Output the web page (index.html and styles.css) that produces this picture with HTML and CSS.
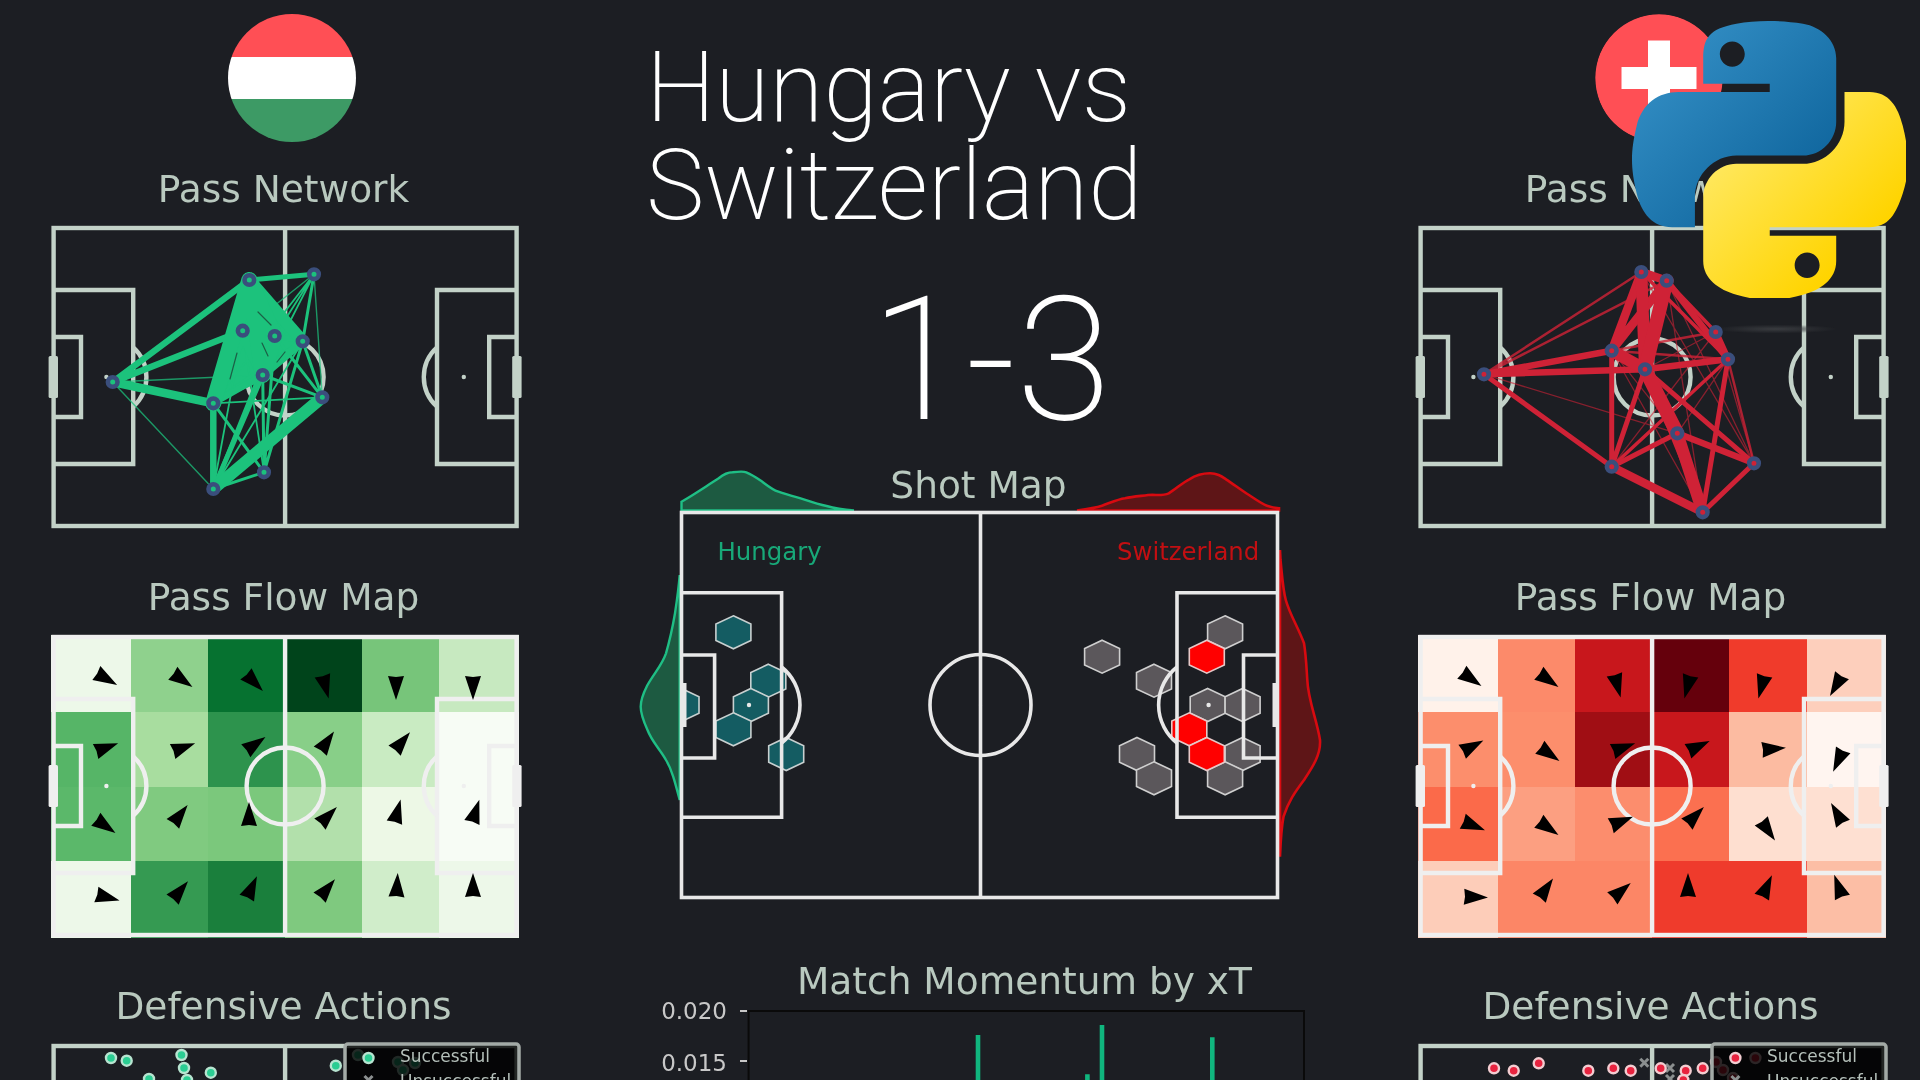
FILE: index.html
```html
<!DOCTYPE html>
<html lang="en">
<head>
  <meta charset="UTF-8" />
  <meta name="viewport" content="width=device-width, initial-scale=1.0"/>
  <title>Hungary vs Switzerland</title>
  <link rel="stylesheet" href="styles.css">
</head>
<body>
  <!-- shared shapes for all the charts -->
  <svg class="defs" aria-hidden="true">
    <defs>
      <g id="pitch" class="pitch">
        <rect x="0" y="0" width="463" height="298"/>
        <path d="M231.5 0V298M0 62H79.6V236H0M0 109H27.4V189H0M463 62H383.4V236H463M463 109H435.6V189H463"/>
        <circle cx="231.5" cy="149" r="38.5"/>
        <path d="M79.6 119.3A40 40 0 0 1 79.6 178.7M383.4 119.3A40 40 0 0 0 383.4 178.7"/>
        <circle class="spot" cx="52.8" cy="149" r="2.2"/>
        <circle class="spot" cx="410.2" cy="149" r="2.2"/>
      </g>
      <g id="goals" class="spot">
        <rect x="-5" y="128" width="9.4" height="42" rx="1.5"/>
        <rect x="458.6" y="128" width="9.4" height="42" rx="1.5"/>
      </g>
      <path id="arrow" d="M0 -14L8 10L0 9L-8 10Z"/>
      <polygon id="hex" points="0,-16.5 17.5,-8.2 17.5,8.2 0,16.5 -17.5,8.2 -17.5,-8.2"/>
      <path id="cross" d="M-4 -4L4 4M-4 4L4 -4"/>
      <linearGradient id="pyBlue" x1="0" y1="0" x2="1" y2="1">
        <stop offset="0" stop-color="#3a96cc"/>
        <stop offset="1" stop-color="#075c94"/>
      </linearGradient>
      <linearGradient id="pyYellow" x1="0.1" y1="0.1" x2="0.75" y2="0.75">
        <stop offset="0" stop-color="#ffeb6e"/>
        <stop offset="1" stop-color="#ffd400"/>
      </linearGradient>
      <radialGradient id="logoShadow">
        <stop offset="0" stop-color="#3a3c40"/>
        <stop offset="1" stop-color="#3a3c40" stop-opacity="0"/>
      </radialGradient>
    </defs>
  </svg>

  <div class="page">

    <!-- Hungary column -->
    <section class="team">
      <div class="flag flag-hu"></div>
      <h2 class="first">Pass Network</h2>
      <svg class="chart lines-soft net-green" width="468" height="303" viewBox="51 226 468 303">
        <use href="#pitch" transform="translate(53.6 228)"/>
        <use href="#goals" transform="translate(53.6 228)"/>
        <g class="edges">
          <polygon class="mass" points="249,282 300,338 264,380 216,402 236,332"/>
          <path stroke-width="1.4" opacity="0.75" d="M112.7 382L213.3 489M314 274.3L322.3 397.3M112.7 382L262.7 375M314 274.3L242.7 330.7"/>
          <path stroke-width="1.8" d="M314 274.3L274.7 336M314 274.3L262.7 375M314 274.3L213.3 403.3M322.3 397.3L213.3 403.3M264 472.3L242.7 330.7M213.3 489L242.7 330.7M213.3 489L302.7 341.3"/>
          <path stroke-width="3" d="M213.3 403.3L264 472.3M213.3 489L262.7 375M213.3 489L274.7 336M322.3 397.3L262.7 375M322.3 397.3L274.7 336M264 472.3L274.7 336M264 472.3L302.7 341.3M264 472.3L262.7 375M213.3 489L264 472.3M322.3 397.3L302.7 341.3M314 274.3L302.7 341.3"/>
          <path stroke-width="5" d="M249.3 280L314 274.3M302.7 341.3L213.3 403.3M274.7 336L302.7 341.3M213.3 489L262.7 375"/>
          <path stroke-width="6.5" d="M112.7 382L249.3 280M112.7 382L242.7 330.7M213.3 403.3L213.3 489M262.7 375L213.3 403.3"/>
          <path stroke-width="8.5" d="M112.7 382L213.3 403.3M302.7 341.3L262.7 375M242.7 330.7L274.7 336"/>
          <path stroke-width="12" d="M249.3 280L242.7 330.7M249.3 280L302.7 341.3M242.7 330.7L213.3 403.3M242.7 330.7L262.7 375M322.3 397.3L213.3 489"/>
          <path stroke-width="16" d="M249.3 280L213.3 403.3M249.3 280L274.7 336M249.3 280L262.7 375M274.7 336L262.7 375"/>
          <path class="slit" d="M258 312L271 325M237 353L230 379M262 343L268 356M285 352L277 362"/>
        </g>
        <g class="nodes">
          <circle cx="112.7" cy="382" r="4.8"/><circle cx="249.3" cy="280" r="4.8"/><circle cx="314" cy="274.3" r="4.8"/>
          <circle cx="242.7" cy="330.7" r="4.8"/><circle cx="274.7" cy="336" r="4.8"/><circle cx="302.7" cy="341.3" r="4.8"/>
          <circle cx="262.7" cy="375" r="4.8"/><circle cx="213.3" cy="403.3" r="4.8"/><circle cx="322.3" cy="397.3" r="4.8"/>
          <circle cx="264" cy="472.3" r="4.8"/><circle cx="213.3" cy="489" r="4.8"/>
        </g>
      </svg>

      <h2>Pass Flow Map</h2>
      <svg class="chart lines-white" width="468" height="303" viewBox="51 635 468 303">
        <g shape-rendering="crispEdges">
          <rect x="51.3" y="635" width="79.7" height="77" fill="#edf8e9"/><rect x="131" y="635" width="77" height="77" fill="#8fd18d"/><rect x="208" y="635" width="77" height="77" fill="#067230"/><rect x="285" y="635" width="77.4" height="77" fill="#00441b"/><rect x="362.4" y="635" width="76.6" height="77" fill="#77c57a"/><rect x="439" y="635" width="80" height="77" fill="#c7e9c0"/>
          <rect x="51.3" y="712" width="79.7" height="74.7" fill="#56b567"/><rect x="131" y="712" width="77" height="74.7" fill="#a8dd9f"/><rect x="208" y="712" width="77" height="74.7" fill="#2d934d"/><rect x="285" y="712" width="77.4" height="74.7" fill="#88cf88"/><rect x="362.4" y="712" width="76.6" height="74.7" fill="#c9ebc2"/><rect x="439" y="712" width="80" height="74.7" fill="#f7fcf5"/>
          <rect x="51.3" y="786.7" width="79.7" height="74.3" fill="#5bb86a"/><rect x="131" y="786.7" width="77" height="74.3" fill="#80ca80"/><rect x="208" y="786.7" width="77" height="74.3" fill="#7bc87c"/><rect x="285" y="786.7" width="77.4" height="74.3" fill="#b2e0ab"/><rect x="362.4" y="786.7" width="76.6" height="74.3" fill="#edf8e6"/><rect x="439" y="786.7" width="80" height="74.3" fill="#f7fcf5"/>
          <rect x="51.3" y="861" width="79.7" height="77" fill="#edf8e9"/><rect x="131" y="861" width="77" height="77" fill="#359a52"/><rect x="208" y="861" width="77" height="77" fill="#1a7f3c"/><rect x="285" y="861" width="77.4" height="77" fill="#7fc97f"/><rect x="362.4" y="861" width="76.6" height="77" fill="#d0edca"/><rect x="439" y="861" width="80" height="77" fill="#edf8e9"/>
        </g>
        <use href="#pitch" transform="translate(53.6 637)"/>
        <use href="#goals" transform="translate(53.6 637)"/>
        <use href="#arrow" transform="translate(105 678) rotate(120)"/><use href="#arrow" transform="translate(181 679) rotate(125)"/><use href="#arrow" transform="translate(253 681) rotate(135)"/><use href="#arrow" transform="translate(325 685) rotate(165)"/><use href="#arrow" transform="translate(396 686) rotate(180)"/><use href="#arrow" transform="translate(473 686) rotate(180)"/>
        <use href="#arrow" transform="translate(105 748) rotate(70)"/><use href="#arrow" transform="translate(182 748) rotate(70)"/><use href="#arrow" transform="translate(254 745) rotate(55)"/><use href="#arrow" transform="translate(326 743) rotate(35)"/><use href="#arrow" transform="translate(401 743) rotate(40)"/>
        <use href="#arrow" transform="translate(104 825) rotate(125)"/><use href="#arrow" transform="translate(179 816) rotate(38)"/><use href="#arrow" transform="translate(249 816) rotate(0)"/><use href="#arrow" transform="translate(327 817) rotate(45)"/><use href="#arrow" transform="translate(397 813) rotate(15)"/><use href="#arrow" transform="translate(475 813) rotate(18)"/>
        <use href="#arrow" transform="translate(106 897) rotate(105)"/><use href="#arrow" transform="translate(179 892) rotate(40)"/><use href="#arrow" transform="translate(251 889) rotate(25)"/><use href="#arrow" transform="translate(326 890) rotate(40)"/><use href="#arrow" transform="translate(397 887) rotate(3)"/><use href="#arrow" transform="translate(473 887) rotate(0)"/>
      </svg>

      <h2>Defensive Actions</h2>
      <svg class="chart lines-soft" width="468" height="303" viewBox="51 1044 468 303">
        <use href="#pitch" transform="translate(53.6 1046)"/>
        <g class="dots-green">
          <circle cx="111" cy="1058" r="5"/><circle cx="126.7" cy="1060.7" r="5"/><circle cx="181.5" cy="1055" r="5"/><circle cx="184" cy="1068" r="5"/><circle cx="210.8" cy="1072.7" r="5"/><circle cx="149" cy="1079" r="5"/><circle cx="187" cy="1080" r="5"/><circle cx="335.8" cy="1065.7" r="5"/>
          <circle cx="358" cy="1055" r="5"/><circle cx="398" cy="1062" r="5"/><circle cx="415" cy="1063" r="5"/><circle cx="403" cy="1070" r="5"/>
        </g>
        <rect class="legend-box" x="345" y="1044" width="174" height="60" rx="3"/>
        <circle class="legend-dot-green" cx="368.5" cy="1058" r="5"/>
        <use class="legend-x" href="#cross" transform="translate(368.5 1080)"/>
        <text class="legend-text" x="400" y="1062">Successful</text>
        <text class="legend-text" x="400" y="1087">Unsuccessful</text>
      </svg>
    </section>

    <!-- match column -->
    <section class="match">
      <h1>Hungary vs<br>Switzerland</h1>
      <div class="score">1-3</div>
      <h2 class="shot-title">Shot Map</h2>
      <svg class="chart shot" width="700" height="395" viewBox="630 510 700 395">
        <path class="kde-green" d="M681.5 510.5V501.7C690 497 705 487 718.7 478.3C724 474 728 472.3 732.5 472.3C739 471.5 743 471 746.3 472.3C753 475 757 478 762.3 481.7C768 486 772 489.5 778.4 491.7C788 495 796 497 803.7 499.3C812 502 820 504.5 826.6 506C833 508 838 509.5 854 510.5Z"/>
        <path class="kde-red" d="M1077 510.5C1088 509 1095 508 1102 505.7C1110 503 1117 499.5 1125 498.3C1133 496.5 1141 496 1148 495C1157 494.5 1163 496 1168.7 493.3C1176 489 1182 483 1189.3 479.3C1196 475 1203 473.3 1210 473.3C1217 473.3 1221 476 1226 479.3C1234 484.5 1241 490 1249 495C1255 499 1262 504 1267 505.7C1272 507.5 1276 508 1279 508.3V510.5Z"/>
        <path class="kde-green" d="M679.7 800C675 782 672 770 666 760C660 749 652 742 647.5 730C643 720 640.7 713 640.7 706.7C640.7 698 644 692 647.5 685C655 672 662 665 666 653.3C669 643 673 625 675 613.3C677 600 678.5 590 679.7 575Z"/>
        <path class="kde-red" d="M1280 550L1280.5 560C1282 575 1283 590 1285.8 600C1290 615 1298 627 1304 643.3C1306 655 1306.5 668 1307.3 680C1308 700 1317 720 1320 740C1321 755 1312 768 1304 780C1295 792 1288 802 1283.5 816.7C1281 830 1280.5 845 1280 856.7Z"/>
        <g class="hex-teal">
          <use href="#hex" x="733.4" y="632.3"/><use href="#hex" x="768.3" y="680.7"/><use href="#hex" x="750.9" y="705"/><use href="#hex" x="733.4" y="729.3"/><use href="#hex" x="786.2" y="754"/>
          <polygon points="681.5,688.5 699,696.8 699,713.2 681.5,721.5"/>
        </g>
        <g class="hex-grey">
          <use href="#hex" x="1225.1" y="632.3"/><use href="#hex" x="1102.1" y="656.7"/><use href="#hex" x="1154" y="680.7"/><use href="#hex" x="1207.7" y="705"/><use href="#hex" x="1242.6" y="705"/><use href="#hex" x="1137" y="754"/><use href="#hex" x="1242.6" y="754"/><use href="#hex" x="1154" y="778.3"/><use href="#hex" x="1225.1" y="778.3"/>
        </g>
        <g class="hex-red">
          <use href="#hex" x="1206.8" y="656.7"/><use href="#hex" x="1189.3" y="729.3"/><use href="#hex" x="1206.8" y="754"/>
        </g>
        <g class="pitch">
          <rect x="681.5" y="512.5" width="596" height="385"/>
          <path d="M980.5 512.5V897.5M681.5 592.7H781.6V817.3H681.5M681.5 655H714.6V758H681.5M1277.5 592.7H1177V817.3H1277.5M1277.5 655H1243.5V758H1277.5"/>
          <circle cx="980.5" cy="705" r="50.5"/>
          <path d="M781.6 667A48.5 48.5 0 0 1 781.6 743M1177 667A48.5 48.5 0 0 0 1177 743"/>
          <circle class="spot" cx="749" cy="705" r="2.2"/>
          <circle class="spot" cx="1208.6" cy="705" r="2.2"/>
          <circle class="spot" cx="980.5" cy="705" r="1.6"/>
        </g>
        <rect class="shot-goal" x="681.5" y="683" width="5" height="44"/>
        <rect class="shot-goal" x="1272.5" y="683" width="5" height="44"/>
        <text class="shot-label shot-label-home" x="717.5" y="560">Hungary</text>
        <text class="shot-label shot-label-away" x="1117" y="560">Switzerland</text>
      </svg>
      <h2 class="momentum-title">Match Momentum by xT</h2>
      <svg class="chart momentum" width="680" height="76" viewBox="640 1004 680 76">
        <rect class="axis-box" x="748.6" y="1011" width="555.4" height="120"/>
        <path class="tick" d="M740 1011H747M740 1061H747"/>
        <text class="tick-label" x="727" y="1019">0.020</text>
        <text class="tick-label" x="727" y="1071">0.015</text>
        <path class="bars" d="M978 1035V1080M1087.4 1074.3V1080M1102 1025V1080M1212.3 1037.3V1080"/>
      </svg>
    </section>

    <!-- Switzerland column -->
    <section class="team">
      <svg class="flag" width="128" height="128" viewBox="0 0 128 128">
        <circle cx="64" cy="64" r="63.7" fill="#ff4f55"/>
        <path d="M53 26.5H75V53H101.5V75H75V101.5H53V75H26.5V53H53Z" fill="#fff"/>
      </svg>
      <h2 class="first">Pass Network</h2>
      <svg class="chart lines-soft net-red" width="468" height="303" viewBox="1418 226 468 303">
        <use href="#pitch" transform="translate(1420.6 228)"/>
        <use href="#goals" transform="translate(1420.6 228)"/>
        <ellipse cx="1776" cy="329" rx="62" ry="4.5" fill="url(#logoShadow)"/>
        <g class="edges">
          <path stroke-width="1.3" opacity="0.6" d="M1484 374.3L1677.3 433.3M1611.7 350.7L1677.3 433.3M1666.7 280.7L1754 463.3M1715.7 332L1754 463.3M1611.7 466.7L1715.7 332M1666.7 280.7L1702.7 512.3M1645 369.3L1715.7 332M1611.7 350.7L1702.7 512.3M1641.3 272L1754 463.3M1677.3 433.3L1728 359.3"/>
          <path stroke-width="2.5" opacity="0.8" d="M1484 374.3L1641.3 272M1484 374.3L1666.7 280.7M1611.7 350.7L1715.7 332M1611.7 350.7L1728 359.3M1728 359.3L1754 463.3"/>
          <path stroke-width="3.5" d="M1728 359.3L1611.7 466.7M1645 369.3L1702.7 512.3M1641.3 272L1728 359.3M1666.7 280.7L1715.7 332"/>
          <path stroke-width="5" d="M1484 374.3L1611.7 466.7M1645 369.3L1754 463.3M1611.7 466.7L1677.3 433.3M1754 463.3L1702.7 512.3M1728 359.3L1702.7 512.3M1611.7 350.7L1611.7 466.7M1645 369.3L1611.7 466.7"/>
          <path stroke-width="6.5" d="M1484 374.3L1611.7 350.7M1484 374.3L1645 369.3M1645 369.3L1728 359.3M1677.3 433.3L1754 463.3M1715.7 332L1728 359.3M1666.7 280.7L1728 359.3"/>
          <path stroke-width="8.5" d="M1641.3 272L1666.7 280.7M1641.3 272L1611.7 350.7M1666.7 280.7L1611.7 350.7M1611.7 466.7L1702.7 512.3"/>
          <path stroke-width="12" d="M1641.3 272L1645 369.3M1677.3 433.3L1702.7 512.3M1611.7 350.7L1645 369.3"/>
          <path stroke-width="14" d="M1666.7 280.7L1645 369.3M1645 369.3L1677.3 433.3"/>
        </g>
        <g class="nodes">
          <circle cx="1484" cy="374.3" r="4.8"/><circle cx="1641.3" cy="272" r="4.8"/><circle cx="1666.7" cy="280.7" r="4.8"/>
          <circle cx="1715.7" cy="332" r="4.8"/><circle cx="1728" cy="359.3" r="4.8"/><circle cx="1611.7" cy="350.7" r="4.8"/>
          <circle cx="1645" cy="369.3" r="4.8"/><circle cx="1677.3" cy="433.3" r="4.8"/><circle cx="1754" cy="463.3" r="4.8"/>
          <circle cx="1611.7" cy="466.7" r="4.8"/><circle cx="1702.7" cy="512.3" r="4.8"/>
        </g>
      </svg>

      <h2>Pass Flow Map</h2>
      <svg class="chart lines-white" width="468" height="303" viewBox="1418 635 468 303">
        <g shape-rendering="crispEdges">
          <rect x="1418" y="635" width="79.8" height="77" fill="#fff2ea"/><rect x="1497.8" y="635" width="77.2" height="77" fill="#fc8a6a"/><rect x="1575" y="635" width="77" height="77" fill="#c8171c"/><rect x="1652" y="635" width="77.2" height="77" fill="#65000c"/><rect x="1729.2" y="635" width="77.5" height="77" fill="#f03b2b"/><rect x="1806.7" y="635" width="79.3" height="77" fill="#fdcfbc"/>
          <rect x="1418" y="712" width="79.8" height="74.7" fill="#fc8e6c"/><rect x="1497.8" y="712" width="77.2" height="74.7" fill="#fc8e6c"/><rect x="1575" y="712" width="77" height="74.7" fill="#a00e14"/><rect x="1652" y="712" width="77.2" height="74.7" fill="#c8171c"/><rect x="1729.2" y="712" width="77.5" height="74.7" fill="#fcbba1"/><rect x="1806.7" y="712" width="79.3" height="74.7" fill="#fff5f0"/>
          <rect x="1418" y="786.7" width="79.8" height="74.3" fill="#fb6a4a"/><rect x="1497.8" y="786.7" width="77.2" height="74.3" fill="#fc9f81"/><rect x="1575" y="786.7" width="77" height="74.3" fill="#fc8d6d"/><rect x="1652" y="786.7" width="77.2" height="74.3" fill="#fb7050"/><rect x="1729.2" y="786.7" width="77.5" height="74.3" fill="#fedfd0"/><rect x="1806.7" y="786.7" width="79.3" height="74.3" fill="#fee0d2"/>
          <rect x="1418" y="861" width="79.8" height="77" fill="#fdcdb9"/><rect x="1497.8" y="861" width="77.2" height="77" fill="#fc8666"/><rect x="1575" y="861" width="77" height="77" fill="#fc8666"/><rect x="1652" y="861" width="77.2" height="77" fill="#ef3b2c"/><rect x="1729.2" y="861" width="77.5" height="77" fill="#ef3b2c"/><rect x="1806.7" y="861" width="79.3" height="77" fill="#fcbea5"/>
        </g>
        <use href="#pitch" transform="translate(1420.6 637)"/>
        <use href="#goals" transform="translate(1420.6 637)"/>
        <use href="#arrow" transform="translate(1470 678) rotate(125)"/><use href="#arrow" transform="translate(1547 679) rotate(125)"/><use href="#arrow" transform="translate(1617 684) rotate(165)"/><use href="#arrow" transform="translate(1688 685) rotate(195)"/><use href="#arrow" transform="translate(1762 685) rotate(195)"/><use href="#arrow" transform="translate(1837 684) rotate(210)"/>
        <use href="#arrow" transform="translate(1471 747) rotate(62)"/><use href="#arrow" transform="translate(1548 753) rotate(125)"/><use href="#arrow" transform="translate(1622 748) rotate(70)"/><use href="#arrow" transform="translate(1697 747) rotate(65)"/><use href="#arrow" transform="translate(1772 749) rotate(85)"/><use href="#arrow" transform="translate(1839 759) rotate(205)"/>
        <use href="#arrow" transform="translate(1472 825) rotate(112)"/><use href="#arrow" transform="translate(1547 827) rotate(125)"/><use href="#arrow" transform="translate(1620 822) rotate(68)"/><use href="#arrow" transform="translate(1694 817) rotate(45)"/><use href="#arrow" transform="translate(1767 829) rotate(145)"/><use href="#arrow" transform="translate(1838 815) rotate(330)"/>
        <use href="#arrow" transform="translate(1474 897) rotate(92)"/><use href="#arrow" transform="translate(1545 890) rotate(35)"/><use href="#arrow" transform="translate(1620 892) rotate(50)"/><use href="#arrow" transform="translate(1688 887) rotate(0)"/><use href="#arrow" transform="translate(1766 888) rotate(25)"/><use href="#arrow" transform="translate(1839 888) rotate(340)"/>
      </svg>

      <h2>Defensive Actions</h2>
      <svg class="chart lines-soft" width="468" height="303" viewBox="1418 1044 468 303">
        <use href="#pitch" transform="translate(1420.6 1046)"/>
        <use class="def-x" href="#cross" transform="translate(1644.3 1062.7)"/>
        <use class="def-x" href="#cross" transform="translate(1670 1068)"/>
        <use class="def-x" href="#cross" transform="translate(1670 1079)"/>
        <g class="dots-red">
          <circle cx="1494" cy="1068.3" r="5"/><circle cx="1513.7" cy="1070.7" r="5"/><circle cx="1538.7" cy="1063.3" r="5"/><circle cx="1588.3" cy="1070.7" r="5"/><circle cx="1613.3" cy="1068.3" r="5"/><circle cx="1630.7" cy="1070.7" r="5"/><circle cx="1660.7" cy="1068.3" r="5"/><circle cx="1685.7" cy="1070.7" r="5"/><circle cx="1702.7" cy="1068.3" r="5"/><circle cx="1683.3" cy="1080" r="5"/>
          <circle cx="1755.4" cy="1058" r="5"/><circle cx="1716" cy="1062" r="5"/><circle cx="1723" cy="1070" r="5"/><circle cx="1733" cy="1078" r="5"/>
        </g>
        <rect class="legend-box" x="1712" y="1044" width="174" height="60" rx="3"/>
        <circle class="legend-dot-red" cx="1735.4" cy="1058" r="5"/>
        <use class="legend-x" href="#cross" transform="translate(1735.4 1080)"/>
        <text class="legend-text" x="1767" y="1062">Successful</text>
        <text class="legend-text" x="1767" y="1087">Unsuccessful</text>
      </svg>
    </section>
  </div>

  <!-- python logo sits over the Switzerland column -->
  <svg class="python-logo" viewBox="0 0 110.42 110.84" aria-hidden="true">
    <path fill="url(#pyBlue)" fill-rule="evenodd" d="M54.919 0C50.335 .022 45.958 .413 42.106 1.095C30.760 3.099 28.700 7.295 28.700 15.032V25.251H55.513V28.657H28.700H18.638C10.845 28.657 4.022 33.341 1.888 42.251C-.574 52.464 -.683 58.837 1.888 69.501C3.794 77.439 8.345 83.095 16.138 83.095H25.356V70.845C25.356 61.995 33.013 54.189 42.106 54.189H68.887C76.342 54.189 82.293 48.051 82.293 40.564V15.032C82.293 7.766 76.163 2.308 68.887 1.095C64.282 .328 59.502 -.020 54.919 0ZM40.419 8.220C43.188 8.220 45.450 10.518 45.450 13.345C45.450 16.161 43.188 18.439 40.419 18.439C37.639 18.439 35.388 16.161 35.388 13.345C35.388 10.518 37.639 8.220 40.419 8.220Z"/>
    <path fill="url(#pyYellow)" fill-rule="evenodd" d="M85.638 28.657V40.563C85.638 49.794 77.812 57.563 68.888 57.563H42.106C34.770 57.563 28.700 63.842 28.700 71.188V96.719C28.700 103.985 35.018 108.259 42.106 110.344C50.593 112.840 58.732 113.291 68.887 110.344C75.637 108.390 82.293 104.457 82.293 96.719V86.501H55.512V83.095H82.293H95.699C103.492 83.095 106.396 77.674 109.106 69.501C111.905 61.088 111.846 52.997 109.106 42.251C107.180 34.514 103.502 28.657 95.699 28.657ZM70.575 93.313C73.354 93.313 75.606 95.591 75.606 98.407C75.606 101.233 73.354 103.532 70.575 103.532C67.805 103.532 65.544 101.233 65.544 98.407C65.544 95.591 67.805 93.313 70.575 93.313Z"/>
  </svg>
</body>
</html>
```

FILE: styles.css
```css
html, body {
  margin: 0;
  padding: 0;
  height: 100%;
}

body {
  width: 1920px;
  height: 1080px;
  overflow: hidden;
  position: relative;
  background-color: #1c1e23;
  font-family: "DejaVu Sans", sans-serif;
  color: #b9c9bf;
}

.defs {
  position: absolute;
  width: 0;
  height: 0;
}

.page {
  display: flex;
  padding-left: 51px;
  height: 1080px;
}

.team {
  width: 468px;
  flex: none;
}

.match {
  width: 899px;
  flex: none;
}

/* section titles */
h2 {
  margin: 45.5px 3px 16.5px 0;
  font-size: 37.5px;
  font-weight: normal;
  line-height: 44px;
  text-align: center;
  filter: blur(0.5px);
}

h2.first {
  margin: 25px 3px 15px 0;
}

.chart {
  display: block;
  overflow: visible;
  filter: blur(0.6px);
}

/* flags */
.flag {
  display: block;
  margin: 14px 0 0 177px;
  width: 128px;
  height: 128px;
  border-radius: 50%;
  filter: blur(0.5px);
}

.flag-hu {
  background: linear-gradient(#ff4f55 0 33.6%, #fff 33.6% 66.4%, #3d9a65 66.4%);
}

/* pitch colours */
.pitch {
  fill: none;
  stroke: currentColor;
  stroke-width: 4.4;
}

.pitch .spot {
  fill: currentColor;
  stroke: none;
}

#goals {
  fill: currentColor;
}

.lines-soft {
  color: #c3d2c8;
}

.lines-white {
  color: #efefef;
}

.edges path {
  fill: none;
  stroke-linecap: round;
}

.nodes circle {
  stroke: #3a4e7c;
  stroke-width: 4.6;
}

.net-green .edges path { stroke: #1cc27c; }
.net-green .edges .mass { fill: #1cc27c; }
.net-green .edges .slit { stroke: #1c1e23; stroke-width: 1.2; opacity: 0.6; }
.net-green .nodes circle { fill: #1cc27c; }
.net-red .edges path { stroke: #cf2236; }
.net-red .nodes circle { fill: #cf2236; }

/* defensive actions */
.dots-green circle,
.legend-dot-green {
  fill: #2bcd92;
  stroke: #b7e4d0;
  stroke-width: 2.4;
}

.dots-red circle,
.legend-dot-red {
  fill: #e8233f;
  stroke: #f3cdd1;
  stroke-width: 2.4;
}

.def-x,
.legend-x {
  fill: none;
  stroke: #8b8f8f;
  stroke-width: 3;
}

.legend-box {
  fill: #000;
  fill-opacity: 0.82;
  stroke: #a3aaa6;
  stroke-width: 3.5;
}

.legend-text {
  fill: #b4bfb9;
  font-size: 17px;
}

/* match column */
h1 {
  margin: 39px 0 0 127px;
  font-family: Roboto, sans-serif;
  font-size: 98.5px;
  font-weight: 200;
  line-height: 98px;
  color: #fff;
}

.score {
  margin-top: 35px;
  padding-left: 45px;
  font-family: Roboto, sans-serif;
  font-size: 173px;
  font-weight: 200;
  line-height: 180px;
  text-align: center;
  color: #fff;
}

.shot-title {
  margin: 13px 0 3px 20px;
}

.shot {
  margin-left: 111px;
  color: #e8e8e8;
}

.shot .pitch {
  stroke-width: 3.6;
}

.shot .spot {
  fill: #e8e8e8;
}

.shot-goal {
  fill: #e8e8e8;
}

.kde-green {
  fill: #1d5a41;
  stroke: #1fbf85;
  stroke-width: 2.4;
}

.kde-red {
  fill: #5e1517;
  stroke: #d80a10;
  stroke-width: 2.6;
}

.hex-teal {
  fill: #145c62;
  stroke: #c8d0d0;
  stroke-width: 1.6;
}

.hex-grey {
  fill: #5b575b;
  stroke: #cfcfcf;
  stroke-width: 1.6;
}

.hex-red {
  fill: #ff0000;
  stroke: #e6c8c8;
  stroke-width: 1.6;
}

.shot-label {
  font-size: 24.4px;
}

.shot-label-home { fill: #18a878; }
.shot-label-away { fill: #c20f12; }

.momentum-title {
  margin: 54px 0 1px 112px;
}

.momentum {
  margin-left: 121px;
}

.axis-box {
  fill: none;
  stroke: #0a0a0a;
  stroke-width: 2;
}

.tick {
  stroke: #c8c8c8;
  stroke-width: 2;
}

.tick-label {
  fill: #c8c8c8;
  font-size: 23px;
  text-anchor: end;
}

.bars {
  stroke: #10b67e;
  stroke-width: 4.6;
}

/* overlay */
.python-logo {
  position: absolute;
  left: 1632px;
  top: 19px;
  width: 274px;
  height: 279px;
}
```
